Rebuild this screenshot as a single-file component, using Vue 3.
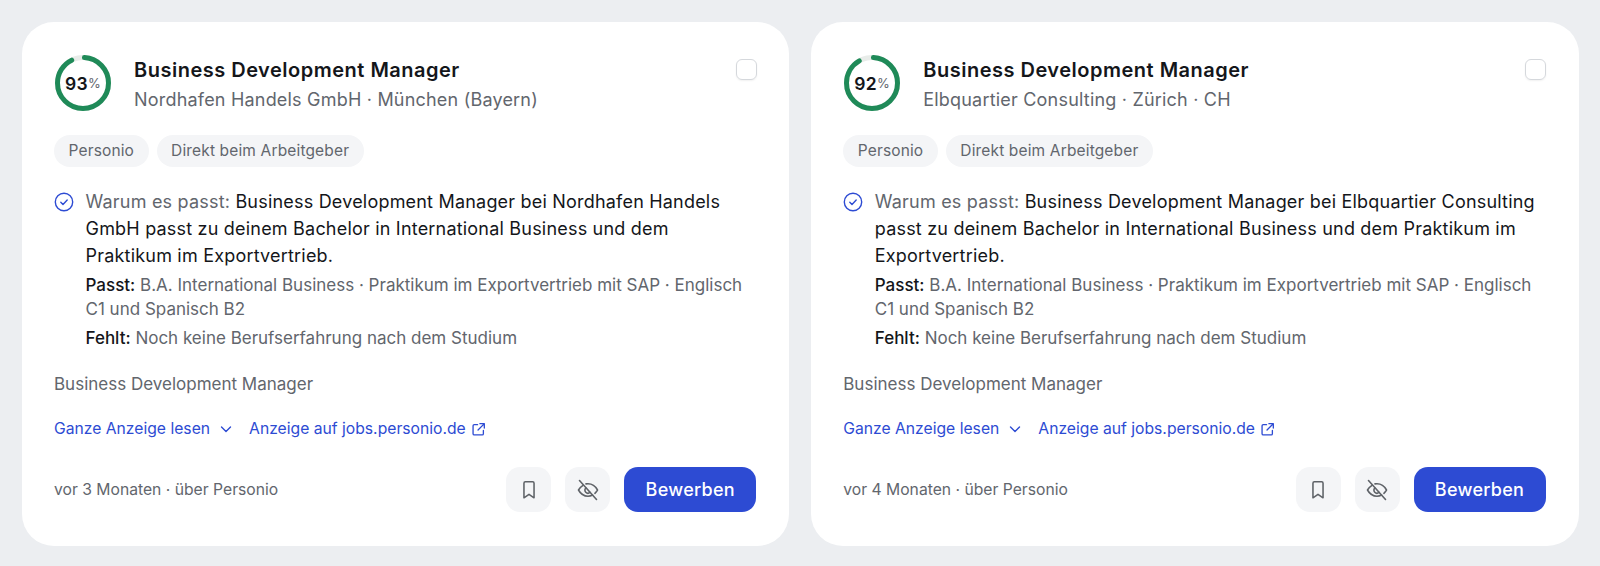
<template>
  <div class="page">
    <article v-for="job in jobs" :key="job.company" class="card">
      <!-- Head -->
      <header class="head">
        <div class="ring">
          <svg viewBox="0 0 56 56" width="56" height="56">
            <circle cx="28" cy="28" r="25.5" class="ring-bg" />
            <circle
              cx="28" cy="28" r="25.5"
              class="ring-val"
              :stroke-dasharray="`${(job.score / 100) * circ - 3} ${circ}`"
              :stroke-dashoffset="-1.5"
              transform="rotate(-90 28 28)"
            />
          </svg>
          <span class="ring-label">{{ job.score }}<small>%</small></span>
        </div>
        <div class="head-text">
          <h2 class="title">Business Development Manager</h2>
          <p class="company">{{ job.company }} · {{ job.place }}</p>
        </div>
        <span class="check"></span>
      </header>

      <!-- Chips -->
      <div class="chips">
        <span class="chip">Personio</span>
        <span class="chip">Direkt beim Arbeitgeber</span>
      </div>

      <!-- Reason -->
      <div class="reason">
        <svg class="reason-icon" viewBox="0 0 20 20" width="20" height="20" fill="none">
          <circle cx="10" cy="10" r="8.7" stroke="#2d4bd3" stroke-width="1.4" />
          <path d="M6.800 10.200l2.200 2.200 4.200-4.400" stroke="#2d4bd3" stroke-width="1.4" stroke-linecap="round" stroke-linejoin="round" />
        </svg>
        <div class="reason-body">
          <p class="why"><span class="muted">Warum es passt:</span> {{ job.why }}</p>
          <p class="fit"><b>Passt:</b> B.A. International Business · Praktikum im Exportvertrieb mit SAP · Englisch C1 und Spanisch B2</p>
          <p class="fit fit-last"><b>Fehlt:</b> Noch keine Berufserfahrung nach dem Studium</p>
        </div>
      </div>

      <p class="role">Business Development Manager</p>

      <!-- Links -->
      <div class="links">
        <a class="link">
          Ganze Anzeige lesen
          <svg class="chev" viewBox="0 0 16 16" width="16" height="16" fill="none">
            <path d="M3.500 6l4.500 4.500L12.500 6" stroke="currentColor" stroke-width="1.4" stroke-linecap="round" stroke-linejoin="round" />
          </svg>
        </a>
        <a class="link">
          Anzeige auf jobs.personio.de
          <svg viewBox="0 0 16 16" width="15" height="15" fill="none">
            <path d="M7 2.800H3.500a1.300 1.300 0 0 0-1.300 1.300v8.400a1.300 1.300 0 0 0 1.300 1.300h8.400a1.300 1.300 0 0 0 1.300-1.300V9M9.500 1.800h4.700v4.700M14 2L7.500 8.500" stroke="currentColor" stroke-width="1.4" stroke-linecap="round" stroke-linejoin="round" />
          </svg>
        </a>
      </div>

      <!-- Footer -->
      <footer class="foot">
        <span class="meta">{{ job.age }} · über Personio</span>
        <div class="actions">
          <button class="icon-btn">
            <svg viewBox="0 0 24 24" width="22" height="22" fill="none">
              <path d="M6.500 4.500A1.500 1.500 0 0 1 8 3h8a1.500 1.500 0 0 1 1.500 1.500V20.500L12 16.800 6.500 20.500z" stroke="#5f6368" stroke-width="1.700" stroke-linejoin="round" />
            </svg>
          </button>
          <button class="icon-btn">
            <svg viewBox="0 0 24 24" width="24" height="24" fill="none" stroke="#5f6368" stroke-width="1.600" stroke-linecap="round" stroke-linejoin="round">
              <path d="M3.500 2.500l17 19" />
              <path d="M7 7.300C4.800 8.700 3.300 10.500 2.500 12c1.800 3.300 5.300 6.200 9.500 6.200 1.700 0 3.300-.5 4.700-1.200" />
              <path d="M10 5.900c.6-.1 1.300-.1 2-.1 4.200 0 7.700 2.900 9.500 6.200-.6 1.100-1.500 2.300-2.600 3.300" />
              <path d="M9.800 10a3 3 0 0 0 4.200 4.300" />
            </svg>
          </button>
          <button class="apply">Bewerben</button>
        </div>
      </footer>
    </article>
  </div>
</template>

<script setup>
const circ = 2 * Math.PI * 25.5

const jobs = [
  {
    score: 93,
    company: 'Nordhafen Handels GmbH',
    place: 'München (Bayern)',
    why: 'Business Development Manager bei Nordhafen Handels GmbH passt zu deinem Bachelor in International Business und dem Praktikum im Exportvertrieb.',
    age: 'vor 3 Monaten'
  },
  {
    score: 92,
    company: 'Elbquartier Consulting',
    place: 'Zürich · CH',
    why: 'Business Development Manager bei Elbquartier Consulting passt zu deinem Bachelor in International Business und dem Praktikum im Exportvertrieb.',
    age: 'vor 4 Monaten'
  }
]
</script>

<style>
html, body { background: #eceef1; }
</style>

<style scoped>
.page {
  display: grid;
  grid-template-columns: 1fr 1fr;
  gap: 21.5px;
  padding: 21.5px;
  background: #eceef1;
  font-family: Inter, "Noto Sans", sans-serif;
  color: #14161a;
}
.card {
  display: flex;
  flex-direction: column;
  height: 524.5px;
  box-sizing: border-box;
  padding: 33.5px 33px 0 32.5px;
  background: #fff;
  border-radius: 32px;
}

.head { display: flex; align-items: flex-start; }
.ring { position: relative; width: 56px; height: 56px; flex-shrink: 0; margin-left: 1px; }
.ring svg { display: block; }
.ring-bg { fill: none; stroke: #e8ece9; stroke-width: 5; }
.ring-val { fill: none; stroke: #1f8a58; stroke-width: 5; stroke-linecap: round; }
.ring-label {
  position: absolute;
  inset: 0;
  display: flex;
  align-items: center;
  justify-content: center;
  font-size: 17.5px;
  font-weight: 600;
  letter-spacing: .3px;
}
.ring-label small { font-size: 13px; font-weight: 400; color: #62666d; }
.head-text { flex: 1; margin-left: 23px; }
.title { margin: 1px 0 0; font-size: 20px; line-height: 28px; font-weight: 600; letter-spacing: .5px; }
.company { margin: 3px 0 0; font-size: 18px; line-height: 26px; color: #62666d; letter-spacing: .2px; }
.check {
  box-sizing: border-box;
  width: 21px;
  height: 21px;
  margin: 4px -.5px 0 0;
  border: 1px solid #d5d8dc;
  border-radius: 6px;
  box-shadow: 0 1px 2px rgba(0, 0, 0, .06);
}

.chips { display: flex; gap: 8px; margin-top: 22px; }
.chip {
  height: 32px;
  padding: 0 14.500px;
  line-height: 32px;
  font-size: 15.5px;
  letter-spacing: .15px;
  color: #62666d;
  background: #f4f5f7;
  border-radius: 16px;
}

.reason { display: flex; margin-top: 21px; }
.reason-icon { flex-shrink: 0; margin: 4px 11.5px 0 0; }
.why { margin: 0; font-size: 18px; line-height: 27px; letter-spacing: .2px; }
.muted { color: #62666d; }
.fit { margin: 4px 0 0; font-size: 17px; line-height: 24px; color: #62666d; }
.fit-last { margin-top: 5px; }
.fit b { font-weight: 500; color: #14161a; }

.role { margin: 22px 0 0; font-size: 17px; line-height: 24px; color: #62666d; }

.links { display: flex; gap: 15px; margin-top: 21px; }
.link {
  display: inline-flex;
  align-items: center;
  gap: 5px;
  font-size: 15.7px;
  line-height: 24px;
  color: #2d4bd3;
}
.chev { margin-left: 3px; }

.foot { display: flex; align-items: center; justify-content: space-between; margin-top: 26px; }
.meta { font-size: 15.7px; color: #62666d; }
.actions { display: flex; gap: 14px; }
.icon-btn {
  display: flex;
  align-items: center;
  justify-content: center;
  width: 45px;
  height: 45px;
  padding: 0;
  border: 0;
  border-radius: 14px;
  background: #f4f5f7;
}
.apply {
  width: 132px;
  height: 45px;
  padding: 0;
  border: 0;
  border-radius: 14px;
  background: #2d4bd3;
  color: #fff;
  font-family: inherit;
  font-size: 18px;
  font-weight: 500;
  letter-spacing: .3px;
}
</style>
